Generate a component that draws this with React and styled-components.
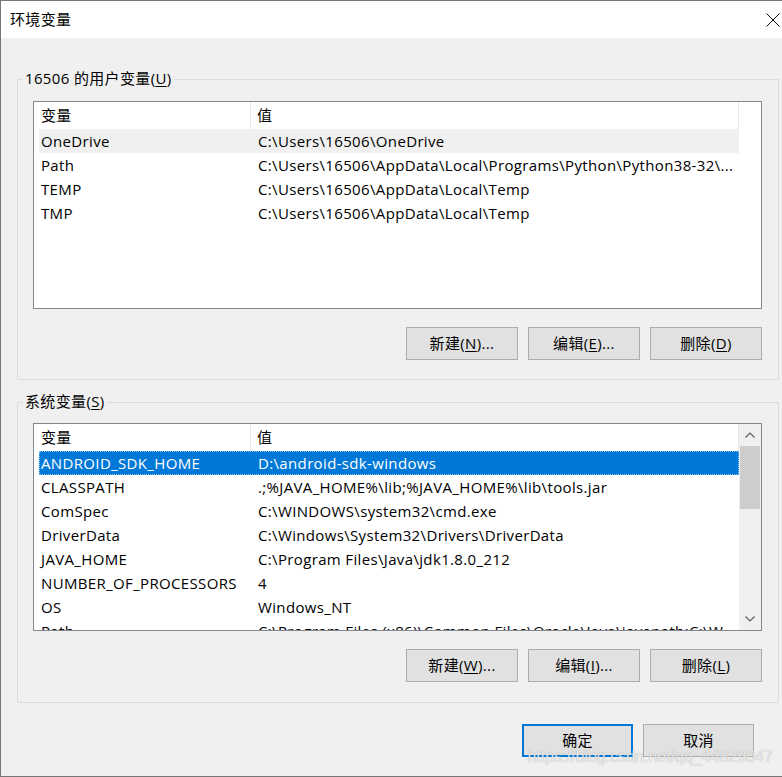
import React from 'react'
import styled, { createGlobalStyle } from 'styled-components'

const userVars = [
  { name: 'OneDrive', value: 'C:\\Users\\16506\\OneDrive', hover: true },
  { name: 'Path', value: 'C:\\Users\\16506\\AppData\\Local\\Programs\\Python\\Python38-32\\...' },
  { name: 'TEMP', value: 'C:\\Users\\16506\\AppData\\Local\\Temp' },
  { name: 'TMP', value: 'C:\\Users\\16506\\AppData\\Local\\Temp' },
]

const sysVars = [
  { name: 'ANDROID_SDK_HOME', value: 'D:\\android-sdk-windows', selected: true },
  { name: 'CLASSPATH', value: '.;%JAVA_HOME%\\lib;%JAVA_HOME%\\lib\\tools.jar' },
  { name: 'ComSpec', value: 'C:\\WINDOWS\\system32\\cmd.exe' },
  { name: 'DriverData', value: 'C:\\Windows\\System32\\Drivers\\DriverData' },
  { name: 'JAVA_HOME', value: 'C:\\Program Files\\Java\\jdk1.8.0_212' },
  { name: 'NUMBER_OF_PROCESSORS', value: '4' },
  { name: 'OS', value: 'Windows_NT' },
  { name: 'Path', value: 'C:\\Program Files (x86)\\Common Files\\Oracle\\Java\\javapath;C:\\W' },
]

const VarList = ({ rows, scroll }) => (
  <List>
    <ListBody>
      <HeaderRow>
        <HeadCell $w={217}>变量</HeadCell>
        <HeadCell $grow>值</HeadCell>
      </HeaderRow>
      {rows.map((r) => (
        <Row key={r.name + r.value} $hover={r.hover} $selected={r.selected}>
          <Cell $w={217}>{r.name}</Cell>
          <Cell $grow>{r.value}</Cell>
        </Row>
      ))}
    </ListBody>
    <ScrollBar $show={scroll}>
      {scroll && (
        <>
          <Arrow>
            <svg width="10" height="6" viewBox="0 0 10 6">
              <path d="M0.5 5.5 L5 1 L9.5 5.5" fill="none" stroke="#606060" strokeWidth="1.2" />
            </svg>
          </Arrow>
          <Thumb />
          <Track />
          <Arrow>
            <svg width="10" height="6" viewBox="0 0 10 6">
              <path d="M0.5 0.5 L5 5 L9.5 0.5" fill="none" stroke="#606060" strokeWidth="1.2" />
            </svg>
          </Arrow>
        </>
      )}
    </ScrollBar>
  </List>
)

const Label = ({ text, mn, tail }) => (
  <>
    {text}(<Mn>{mn}</Mn>){tail}
  </>
)

const App = () => {
  return (
    <>
      <Global />
      <Window>
        <TitleBar>
          <Title>环境变量</Title>
          <Close>
            <svg width="14" height="14" viewBox="0 0 14 14">
              <path d="M0.5 0.5 L13.5 13.5 M13.5 0.5 L0.5 13.5" stroke="#111" strokeWidth="1" />
            </svg>
          </Close>
        </TitleBar>
        <Body>
          <Group $top={31}>
            <Legend>
              <Label text="16506 的用户变量" mn="U" />
            </Legend>
            <GroupInner $padTop={12} $padBottom={19}>
              <VarList rows={userVars} />
              <ButtonRow>
                <Button><Label text="新建" mn="N" tail="..." /></Button>
                <Button><Label text="编辑" mn="E" tail="..." /></Button>
                <Button><Label text="删除" mn="D" /></Button>
              </ButtonRow>
            </GroupInner>
          </Group>
          <Group $top={12}>
            <Legend>
              <Label text="系统变量" mn="S" />
            </Legend>
            <GroupInner $padTop={11} $padBottom={20}>
              <VarList rows={sysVars} scroll />
              <ButtonRow>
                <Button><Label text="新建" mn="W" tail="..." /></Button>
                <Button><Label text="编辑" mn="I" tail="..." /></Button>
                <Button><Label text="删除" mn="L" /></Button>
              </ButtonRow>
            </GroupInner>
          </Group>
          <Footer>
            <Button $primary $w={111}>确定</Button>
            <Button $w={111}>取消</Button>
          </Footer>
        </Body>
        <Watermark>https://blog.csdn.net/qq_44829047</Watermark>
      </Window>
    </>
  )
}

const Global = createGlobalStyle`
  html, body {
    margin: 0;
    padding: 0;
    background: #f0f0f0;
  }
`

const Window = styled.div`
  position: relative;
  width: 782px;
  height: 777px;
  box-sizing: border-box;
  border: 1px solid #777777;
  border-right: none;
  background: #f0f0f0;
  display: flex;
  flex-direction: column;
  overflow: hidden;
  font-family: 'Open Sans', 'Noto Sans CJK SC', sans-serif;
  font-size: 15px;
  letter-spacing: 0.35px;
  color: #000;
`
const TitleBar = styled.div`
  height: 37px;
  flex: none;
  background: #fff;
  display: flex;
  align-items: center;
  justify-content: space-between;
  padding-left: 9px;
`
const Title = styled.div`
  font-size: 15px;
  line-height: 20px;
  margin-top: -2px;
`
const Close = styled.div`
  display: flex;
  margin-right: 2px;
  margin-top: 1px;
`
const Body = styled.div`
  flex: 1;
  display: flex;
  flex-direction: column;
  padding-left: 16px;
`
const Group = styled.fieldset`
  margin: ${(p) => p.$top}px 0 0 0;
  width: 762px;
  box-sizing: border-box;
  border: 1px solid #dcdcdc;
  padding: 0;
  min-width: 0;
`
const Legend = styled.legend`
  margin-left: 5px;
  padding: 0 2px 2px;
  line-height: 18px;
  height: 20px;
  box-sizing: border-box;
`
const Mn = styled.span`
  text-decoration: underline;
  text-underline-offset: 2px;
`
const GroupInner = styled.div`
  padding: ${(p) => p.$padTop}px 16px ${(p) => p.$padBottom}px 15px;
  display: flex;
  flex-direction: column;
`
const List = styled.div`
  width: 729px;
  height: 208px;
  box-sizing: border-box;
  border: 1px solid #828790;
  background: #fff;
  display: flex;
  overflow: hidden;
`
const ListBody = styled.div`
  width: 705px;
  flex: none;
  display: flex;
  flex-direction: column;
  overflow: hidden;
`
const HeaderRow = styled.div`
  height: 27px;
  flex: none;
  display: flex;
  border-right: 1px solid #e5e5e5;
`
const HeadCell = styled.div`
  ${(p) => (p.$grow ? 'flex: 1;' : `width: ${p.$w}px; flex: none;`)}
  box-sizing: border-box;
  padding-left: ${(p) => (p.$grow ? 6 : 7)}px;
  line-height: 27px;
  border-right: ${(p) => (p.$grow ? 'none' : '1px solid #e5e5e5')};
  white-space: nowrap;
`
const Row = styled.div`
  height: 24px;
  flex: none;
  margin-left: 5px;
  display: flex;
  box-sizing: border-box;
  background: ${(p) => (p.$selected ? '#0078d7' : p.$hover ? '#f0f0f0' : 'transparent')};
  color: ${(p) => (p.$selected ? '#fff' : '#000')};
  outline: ${(p) => (p.$selected ? '1px dotted rgba(255,255,255,0.55)' : 'none')};
  outline-offset: -1px;
`
const Cell = styled.div`
  ${(p) => (p.$grow ? 'flex: 1; min-width: 0;' : `width: ${p.$w}px; flex: none;`)}
  box-sizing: border-box;
  padding-left: 2px;
  line-height: 24px;
  white-space: nowrap;
  overflow: hidden;
`
const ScrollBar = styled.div`
  width: 22px;
  flex: none;
  display: flex;
  flex-direction: column;
  background: ${(p) => (p.$show ? '#f0f0f0' : '#fff')};
`
const Arrow = styled.div`
  height: 22px;
  flex: none;
  display: flex;
  align-items: center;
  justify-content: center;
`
const Thumb = styled.div`
  height: 63px;
  margin: 0 1px;
  background: #cdcdcd;
  flex: none;
`
const Track = styled.div`
  flex: 1;
`
const ButtonRow = styled.div`
  display: flex;
  justify-content: flex-end;
  gap: 10px;
  margin-top: 18px;
`
const Button = styled.button`
  width: ${(p) => p.$w || 112}px;
  height: 33px;
  box-sizing: border-box;
  border: ${(p) => (p.$primary ? '2px solid #0078d7' : '1px solid #adadad')};
  background: #e1e1e1;
  font-family: inherit;
  font-size: 15px;
  letter-spacing: inherit;
  color: #000;
  padding: 0 0 2px;
  line-height: 20px;
`
const Footer = styled.div`
  display: flex;
  justify-content: flex-end;
  gap: 10px;
  margin-top: 21px;
  padding-right: 28px;
`
const Watermark = styled.div`
  position: absolute;
  right: 9px;
  bottom: 9px;
  font-family: 'Liberation Sans', Arial, sans-serif;
  font-size: 16px;
  line-height: 20px;
  letter-spacing: 0;
  color: rgba(255, 255, 255, 0.75);
  text-shadow: 0 0 1px rgba(120, 120, 120, 0.7);
  pointer-events: none;
`

export default App
